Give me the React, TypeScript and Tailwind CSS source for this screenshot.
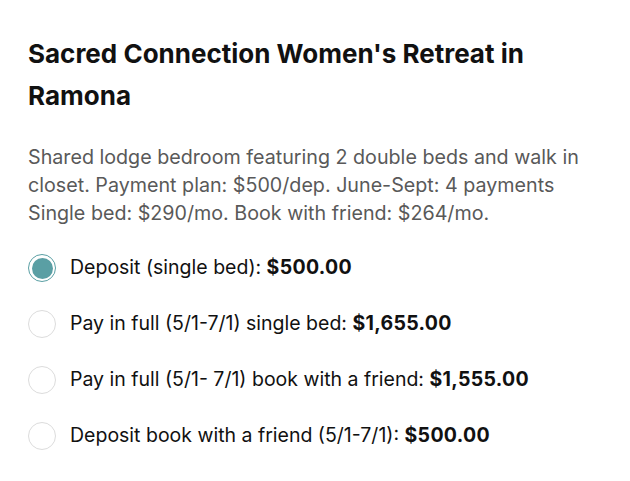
const options = [
  { label: "Deposit (single bed): ", price: "$500.00" },
  { label: "Pay in full (5/1-7/1) single bed: ", price: "$1,655.00" },
  { label: "Pay in full (5/1- 7/1) book with a friend: ", price: "$1,555.00" },
  { label: "Deposit book with a friend (5/1-7/1): ", price: "$500.00" },
]

export default function App() {
  const selected = 0

  return (
    <div className="min-h-screen bg-white px-7 pt-[33px] font-['Inter',sans-serif]">
      <h1 className="w-[560px] text-[26px] font-bold leading-[42px] text-[#111111]">
        Sacred Connection Women's Retreat in
        <br />
        Ramona
      </h1>
      <p className="mt-[26px] w-[590px] text-[19.7px] leading-[28px] text-[#595959]">
        Shared lodge bedroom featuring 2 double beds and walk in
        <br />
        closet. Payment plan: $500/dep. June-Sept: 4 payments
        <br />
        Single bed: $290/mo. Book with friend: $264/mo.
      </p>
      <div className="mt-[27px] flex flex-col gap-[28px]">
        {options.map((opt, i) => (
          <label key={i} className="flex h-[28px] items-center gap-[14px]">
            {i === selected ? (
              <span className="flex size-[28px] items-center justify-center rounded-full border-[1.5px] border-[#5a9fa4] bg-white">
                <span className="size-[21px] rounded-full bg-[#5a9fa4]" />
              </span>
            ) : (
              <span className="size-[28px] rounded-full border border-[#dcdcdc] bg-white" />
            )}
            <span className="text-[19.5px] text-[#111111]">
              {opt.label}
              <span className="font-bold tracking-[0.3px]">{opt.price}</span>
            </span>
          </label>
        ))}
      </div>
    </div>
  )
}
